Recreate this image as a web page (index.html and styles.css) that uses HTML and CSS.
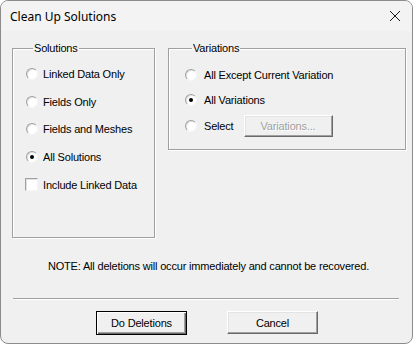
FILE: index.html
```html
<!DOCTYPE html>
<html>
  <head>
    <meta charset="utf-8" />
    <title>Clean Up Solutions</title>
    <link rel="stylesheet" href="styles.css">
  </head>
  <body>
    <div class="window">
      <div class="titlebar">
        <span class="title">Clean Up Solutions</span>
        <svg class="close" width="12" height="12" viewBox="0 0 12 12">
          <path d="M1 1 L11 11 M11 1 L1 11" stroke="#1a1a1a" stroke-width="1" fill="none" />
        </svg>
      </div>

      <div class="client">
        <div class="groups">
          <fieldset class="group solutions">
            <legend>Solutions</legend>
            <div class="option"><span class="radio"></span>Linked Data Only</div>
            <div class="option"><span class="radio"></span>Fields Only</div>
            <div class="option"><span class="radio"></span>Fields and Meshes</div>
            <div class="option"><span class="radio checked"></span>All Solutions</div>
            <div class="option"><span class="check"></span>Include Linked Data</div>
          </fieldset>

          <fieldset class="group variations">
            <legend>Variations</legend>
            <div class="option"><span class="radio"></span>All Except Current Variation</div>
            <div class="option"><span class="radio checked"></span>All Variations</div>
            <div class="option">
              <span class="radio"></span>Select
              <button class="btn small" disabled>Variations...</button>
            </div>
          </fieldset>
        </div>

        <p class="note">NOTE: All deletions will occur immediately and cannot be recovered.</p>

        <hr class="separator" />

        <div class="actions">
          <button class="btn default">Do Deletions</button>
          <button class="btn">Cancel</button>
        </div>
      </div>
    </div>
  </body>
</html>
```

FILE: styles.css
```css
:root {
  --face: #f0f0f0;
  --shadow: #a0a0a0;
  --dark: #696969;
}

html,
body {
  margin: 0;
  padding: 0;
  background: #ffffff;
}

body,
button {
  font-family: "Liberation Sans", Arial, sans-serif;
  font-size: 11px;
  letter-spacing: -0.18px;
  color: #000;
}

.window {
  width: 413px;
  height: 344px;
  box-sizing: border-box;
  border: 1px solid #8c8c8c;
  border-radius: 8px;
  overflow: hidden;
  background: var(--face);
  display: flex;
  flex-direction: column;
}

.titlebar {
  height: 30px;
  flex: 0 0 auto;
  background: #f3f3f3;
  display: flex;
  align-items: center;
  justify-content: space-between;
  padding: 0 11px 0 9px;
}

.title {
  font-family: "Noto Sans", "Open Sans", sans-serif;
  font-size: 12px;
  letter-spacing: 0;
  color: #000;
}

.close {
  display: block;
}

.client {
  flex: 1 1 auto;
  display: flex;
  flex-direction: column;
  padding: 11px 7px 0 11px;
}

.groups {
  display: grid;
  grid-template-columns: 143px 238px;
  column-gap: 13px;
  align-items: start;
}

.group {
  margin: 0;
  padding: 5px 0 0 13px;
  border: 1px solid var(--shadow);
  box-shadow: inset 1px 1px 0 #ffffff, 1px 1px 0 #ffffff;
  min-width: 0;
}

.group legend {
  padding: 0 1px;
  margin-left: 7px;
  line-height: 13px;
}

.solutions {
  height: 196px;
  box-sizing: border-box;
}

.variations {
  height: 108px;
  box-sizing: border-box;
  padding-left: 16px;
  padding-top: 7px;
}

.option {
  height: 27.75px;
  display: flex;
  align-items: center;
  white-space: nowrap;
}

.variations .option {
  height: 25.5px;
}

.radio {
  width: 12px;
  height: 12px;
  box-sizing: border-box;
  border-radius: 50%;
  background: #ffffff;
  border: 1px solid;
  border-color: #a0a0a0 #f4f4f4 #f4f4f4 #a0a0a0;
  box-shadow: inset 1px 1px 0 #e3e3e3;
  margin-right: 5px;
  flex: 0 0 auto;
  display: flex;
  align-items: center;
  justify-content: center;
}

.radio.checked::after {
  content: "";
  width: 4px;
  height: 4px;
  border-radius: 50%;
  background: #000;
}

.variations .radio {
  margin-right: 7px;
}

.check {
  width: 13px;
  height: 13px;
  box-sizing: border-box;
  background: #ffffff;
  border: 1px solid;
  border-color: #a0a0a0 #f4f4f4 #f4f4f4 #a0a0a0;
  box-shadow: inset 1px 1px 0 #e3e3e3;
  margin: 0 5px 0 -1px;
  flex: 0 0 auto;
}

.btn {
  height: 23px;
  box-sizing: border-box;
  background: var(--face);
  border: 1px solid;
  border-color: #ffffff var(--dark) var(--dark) #ffffff;
  box-shadow: inset -1px -1px 0 var(--shadow), inset 1px 1px 0 #e3e3e3;
  padding: 0;
}

.btn.small {
  width: 89px;
  height: 22px;
  margin-left: 10px;
  color: #a0a0a0;
  text-shadow: 1px 1px 0 #fff;
}

.btn.default {
  border: 1px solid #000;
  box-shadow: inset 1px 1px 0 #ffffff, inset -1px -1px 0 var(--dark), inset -2px -2px 0 var(--shadow);
  height: 24px;
}

.note {
  margin: 22px 0 0;
  text-align: center;
  line-height: 13px;
}

.separator {
  margin: 25px 0 0 1px;
  width: 386px;
  height: 0;
  border: 0;
  border-top: 1px solid var(--shadow);
  border-bottom: 1px solid #ffffff;
}

.actions {
  display: flex;
  justify-content: center;
  align-items: flex-start;
  gap: 40px;
  margin-top: 11px;
  padding-right: 3px;
}

.actions .btn {
  width: 91px;
}
```
